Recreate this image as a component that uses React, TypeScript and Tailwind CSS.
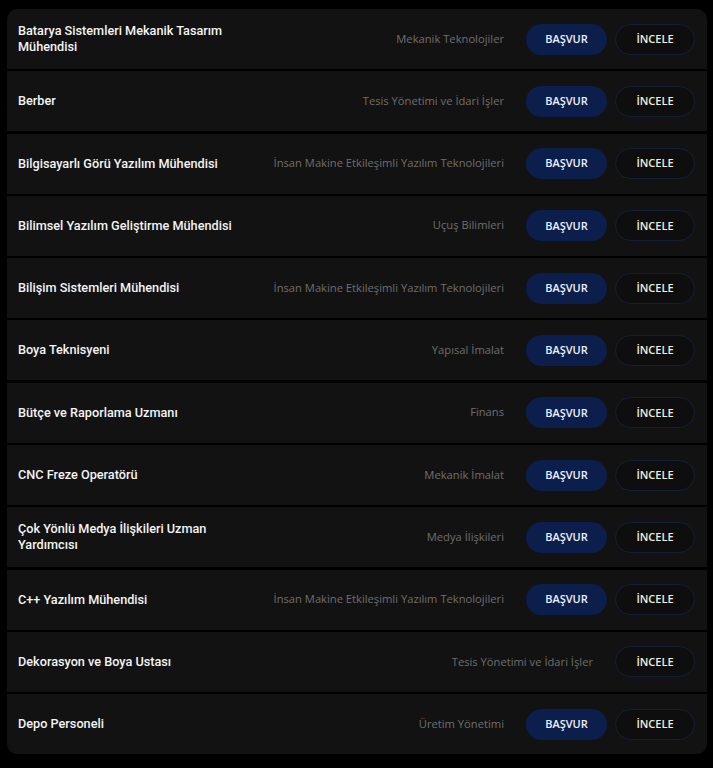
import React from 'react'

interface Ilan { // iş ilanı
  title: string,
  unit: string,
  apply: boolean
}

const ilanlar: Ilan[] = [
  { title: 'Batarya Sistemleri Mekanik Tasarım Mühendisi', unit: 'Mekanik Teknolojiler', apply: true },
  { title: 'Berber', unit: 'Tesis Yönetimi ve İdari İşler', apply: true },
  { title: 'Bilgisayarlı Görü Yazılım Mühendisi', unit: 'İnsan Makine Etkileşimli Yazılım Teknolojileri', apply: true },
  { title: 'Bilimsel Yazılım Geliştirme Mühendisi', unit: 'Uçuş Bilimleri', apply: true },
  { title: 'Bilişim Sistemleri Mühendisi', unit: 'İnsan Makine Etkileşimli Yazılım Teknolojileri', apply: true },
  { title: 'Boya Teknisyeni', unit: 'Yapısal İmalat', apply: true },
  { title: 'Bütçe ve Raporlama Uzmanı', unit: 'Finans', apply: true },
  { title: 'CNC Freze Operatörü', unit: 'Mekanik İmalat', apply: true },
  { title: 'Çok Yönlü Medya İlişkileri Uzman Yardımcısı', unit: 'Medya İlişkileri', apply: true },
  { title: 'C++ Yazılım Mühendisi', unit: 'İnsan Makine Etkileşimli Yazılım Teknolojileri', apply: true },
  { title: 'Dekorasyon ve Boya Ustası', unit: 'Tesis Yönetimi ve İdari İşler', apply: false },
  { title: 'Depo Personeli', unit: 'Üretim Yönetimi', apply: true },
]

export default function App() {
  return (
    <div className="min-h-screen w-full bg-black pt-[9px] pl-[7px] pr-[6px]">
      {/* ilan listesi */}
      <div className="flex flex-col gap-[2.3px] overflow-hidden rounded-[10px]">
        {ilanlar.map((ilan) => (
          <div key={ilan.title} className="flex h-[60px] items-center bg-[#121212] pl-[11px] pr-[12px]">
            <div className="w-[220px] font-['Roboto',sans-serif] text-[12.7px] font-medium leading-[16px] text-[#f4f4f4]">
              {ilan.title}
            </div>
            <div className="flex-1 text-right font-['Open_Sans',sans-serif] text-[11.2px] text-[#6f6f6f]">
              {ilan.unit}
            </div>
            <div className="ml-[22px] flex gap-2 font-['Open_Sans',sans-serif] text-[11px] font-semibold">
              {ilan.apply && (
                <button className="h-[31px] w-[81px] rounded-full bg-[#0c1e4c] text-[#eef1f8]">BAŞVUR</button>
              )}
              <button className="h-[31px] w-[80px] rounded-full border border-[#141f36] bg-[#0e0e0e] text-[#f3efdc]">İNCELE</button>
            </div>
          </div>
        ))}
      </div>
    </div>
  )
}
